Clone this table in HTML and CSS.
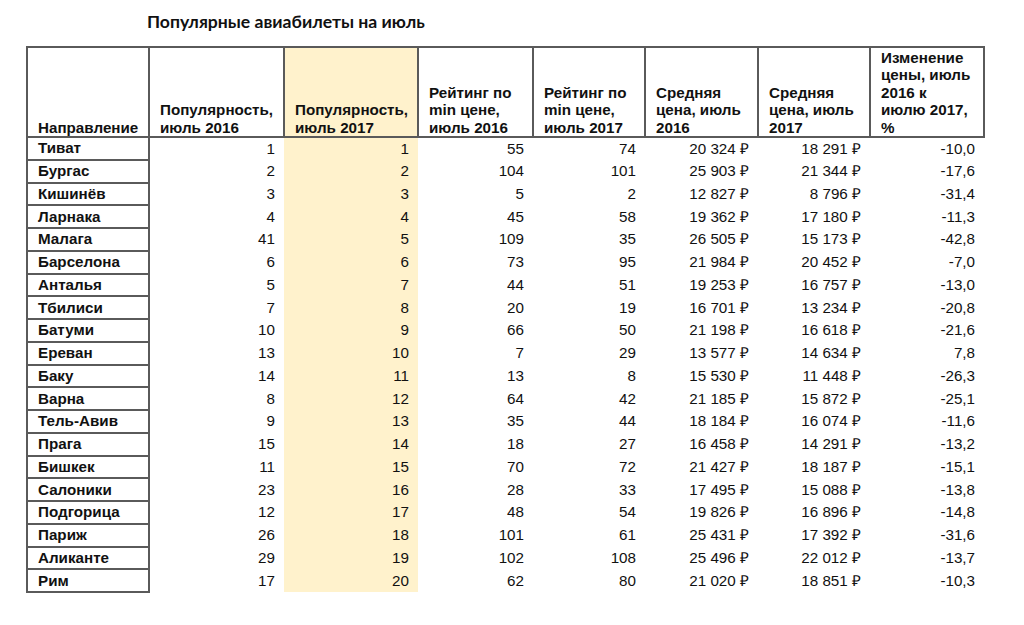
FILE: index.html
```html
<!DOCTYPE html>
<html lang="ru">
<head>
<meta charset="utf-8">
<link rel="stylesheet" href="styles.css">
</head>
<body>
<h1 class="title">Популярные авиабилеты на июль</h1>
<table class="grid">
<colgroup>
<col class="c1"><col class="c2"><col class="c3"><col class="c4"><col class="c5"><col class="c6"><col class="c7"><col class="c8">
</colgroup>
<thead>
<tr>
<th>Направление</th>
<th>Популярность, июль 2016</th>
<th class="hl">Популярность, июль 2017</th>
<th>Рейтинг по min цене, июль 2016</th>
<th>Рейтинг по min цене, июль 2017</th>
<th>Средняя цена, июль 2016</th>
<th>Средняя цена, июль 2017</th>
<th class="last">Изменение цены, июль 2016 к июлю 2017, %</th>
</tr>
</thead>
<tbody>
<tr><td class="name">Тиват</td><td>1</td><td class="hl">1</td><td>55</td><td>74</td><td>20 324 ₽</td><td>18 291 ₽</td><td>-10,0</td></tr>
<tr><td class="name">Бургас</td><td>2</td><td class="hl">2</td><td>104</td><td>101</td><td>25 903 ₽</td><td>21 344 ₽</td><td>-17,6</td></tr>
<tr><td class="name">Кишинёв</td><td>3</td><td class="hl">3</td><td>5</td><td>2</td><td>12 827 ₽</td><td>8 796 ₽</td><td>-31,4</td></tr>
<tr><td class="name">Ларнака</td><td>4</td><td class="hl">4</td><td>45</td><td>58</td><td>19 362 ₽</td><td>17 180 ₽</td><td>-11,3</td></tr>
<tr><td class="name">Малага</td><td>41</td><td class="hl">5</td><td>109</td><td>35</td><td>26 505 ₽</td><td>15 173 ₽</td><td>-42,8</td></tr>
<tr><td class="name">Барселона</td><td>6</td><td class="hl">6</td><td>73</td><td>95</td><td>21 984 ₽</td><td>20 452 ₽</td><td>-7,0</td></tr>
<tr><td class="name">Анталья</td><td>5</td><td class="hl">7</td><td>44</td><td>51</td><td>19 253 ₽</td><td>16 757 ₽</td><td>-13,0</td></tr>
<tr><td class="name">Тбилиси</td><td>7</td><td class="hl">8</td><td>20</td><td>19</td><td>16 701 ₽</td><td>13 234 ₽</td><td>-20,8</td></tr>
<tr><td class="name">Батуми</td><td>10</td><td class="hl">9</td><td>66</td><td>50</td><td>21 198 ₽</td><td>16 618 ₽</td><td>-21,6</td></tr>
<tr><td class="name">Ереван</td><td>13</td><td class="hl">10</td><td>7</td><td>29</td><td>13 577 ₽</td><td>14 634 ₽</td><td>7,8</td></tr>
<tr><td class="name">Баку</td><td>14</td><td class="hl">11</td><td>13</td><td>8</td><td>15 530 ₽</td><td>11 448 ₽</td><td>-26,3</td></tr>
<tr><td class="name">Варна</td><td>8</td><td class="hl">12</td><td>64</td><td>42</td><td>21 185 ₽</td><td>15 872 ₽</td><td>-25,1</td></tr>
<tr><td class="name">Тель-Авив</td><td>9</td><td class="hl">13</td><td>35</td><td>44</td><td>18 184 ₽</td><td>16 074 ₽</td><td>-11,6</td></tr>
<tr><td class="name">Прага</td><td>15</td><td class="hl">14</td><td>18</td><td>27</td><td>16 458 ₽</td><td>14 291 ₽</td><td>-13,2</td></tr>
<tr><td class="name">Бишкек</td><td>11</td><td class="hl">15</td><td>70</td><td>72</td><td>21 427 ₽</td><td>18 187 ₽</td><td>-15,1</td></tr>
<tr><td class="name">Салоники</td><td>23</td><td class="hl">16</td><td>28</td><td>33</td><td>17 495 ₽</td><td>15 088 ₽</td><td>-13,8</td></tr>
<tr><td class="name">Подгорица</td><td>12</td><td class="hl">17</td><td>48</td><td>54</td><td>19 826 ₽</td><td>16 896 ₽</td><td>-14,8</td></tr>
<tr><td class="name">Париж</td><td>26</td><td class="hl">18</td><td>101</td><td>61</td><td>25 431 ₽</td><td>17 392 ₽</td><td>-31,6</td></tr>
<tr><td class="name">Аликанте</td><td>29</td><td class="hl">19</td><td>102</td><td>108</td><td>25 496 ₽</td><td>22 012 ₽</td><td>-13,7</td></tr>
<tr><td class="name">Рим</td><td>17</td><td class="hl">20</td><td>62</td><td>80</td><td>21 020 ₽</td><td>18 851 ₽</td><td>-10,3</td></tr>
</tbody>
</table>
</body>
</html>
```
FILE: styles.css
```css
html, body {
  margin: 0;
  padding: 0;
  background: #ffffff;
}

body {
  font-family: "Liberation Sans", Arial, sans-serif;
  color: #111111;
}

.title {
  margin: 0;
  padding: 12px 0 0 147px;
  height: 46px;
  box-sizing: border-box;
  font-family: Lato, "Open Sans", sans-serif;
  font-weight: 700;
  font-size: 17.6px;
  line-height: 20px;
  color: #111111;
}

.grid {
  margin: 0 0 0 26px;
  border-collapse: collapse;
  table-layout: fixed;
  width: 957px;
  font-size: 15.2px;
}

.c1 { width: 122px; }
.c2 { width: 135px; }
.c3 { width: 134px; }
.c4 { width: 115px; }
.c5 { width: 112px; }
.c6 { width: 113px; }
.c7 { width: 112px; }
.c8 { width: 114px; }

.grid th {
  height: 90px;
  box-sizing: border-box;
  border: 2px solid #5a5a5a;
  padding: 0 4px 0 10px;
  vertical-align: bottom;
  text-align: left;
  font-weight: 700;
  line-height: 17.4px;
}

.grid th.last {
  padding-right: 10px;
}

.grid tbody tr {
  height: 22.75px;
}

.grid td {
  padding: 0 9px 0 6px;
  text-align: right;
  vertical-align: middle;
  line-height: 18px;
  white-space: nowrap;
}

.grid td.name {
  text-align: left;
  font-weight: 700;
  padding-left: 10px;
  border: 2px solid #5a5a5a;
}

.hl {
  background: #fff2cc;
}
```
